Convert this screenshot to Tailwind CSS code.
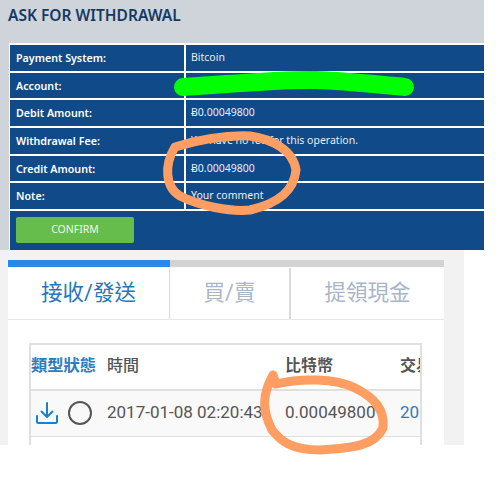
<!DOCTYPE html>
<html>
<head>
    <meta charset="UTF-8" />
    <title>Ask for withdrawal</title>
    <script src="https://cdn.jsdelivr.net/npm/@tailwindcss/browser@4"></script>
</head>
<body class="relative bg-white w-[500px] h-[500px] overflow-hidden">
    <!-- Withdrawal panel -->
    <div class="w-[484px] h-[250px] bg-[#cfd3da] font-['Noto_Sans',sans-serif] pt-[4px]">
        <h1 class="pl-[8px] h-[39px] text-[15.5px] leading-[22px] font-semibold text-[#143a63]">ASK FOR WITHDRAWAL</h1>
        <div class="ml-[9px] bg-white pl-[1px] pt-[2px] text-[10.5px] text-[#e8edf3]">
            <div class="grid grid-cols-[174px_1fr] gap-x-[2px] gap-y-[2px] bg-white">
                <div class="bg-[#104a89] h-[25.7px] pl-[6px] flex items-center text-[10.7px] font-semibold text-white">Payment System:</div>
                <div class="bg-[#104a89] h-[25.7px] pl-[5px] flex items-center">Bitcoin</div>
                <div class="bg-[#104a89] h-[25.7px] pl-[6px] flex items-center text-[10.7px] font-semibold text-white">Account:</div>
                <div class="bg-[#104a89] h-[25.7px] pl-[5px] flex items-center"></div>
                <div class="bg-[#104a89] h-[25.7px] pl-[6px] flex items-center text-[10.7px] font-semibold text-white">Debit Amount:</div>
                <div class="bg-[#104a89] h-[25.7px] pl-[5px] flex items-center">Ƀ0.00049800</div>
                <div class="bg-[#104a89] h-[25.7px] pl-[6px] flex items-center text-[10.7px] font-semibold text-white">Withdrawal Fee:</div>
                <div class="bg-[#104a89] h-[25.7px] pl-[5px] flex items-center">We have no fee for this operation.</div>
                <div class="bg-[#104a89] h-[25.7px] pl-[6px] flex items-center text-[10.7px] font-semibold text-white">Credit Amount:</div>
                <div class="bg-[#104a89] h-[25.7px] pl-[5px] flex items-center">Ƀ0.00049800</div>
                <div class="bg-[#104a89] h-[25.7px] pl-[6px] flex items-center text-[10.7px] font-semibold text-white">Note:</div>
                <div class="bg-[#104a89] h-[25.7px] pl-[5px] flex items-center">Your comment</div>
                <div class="col-span-2 bg-[#104a89] h-[39px] pl-[6px] pt-[6px]">
                    <button class="w-[118px] h-[26px] rounded-[2px] bg-[#67bd4c] text-[10.5px] text-[#eef7ea]">CONFIRM</button>
                </div>
            </div>
        </div>
    </div>

    <!-- Wallet card -->
    <div class="w-[464px] h-[195px] bg-[#f2f2f2] pl-[8px] pt-[10px] overflow-hidden font-['Roboto','Noto_Sans_CJK_TC',sans-serif]">
        <div class="w-[436px] h-[185px] bg-white">
            <div class="flex h-[7px] bg-[#d3d3d3]">
                <div class="w-[162px] bg-[#2b88e6]"></div>
            </div>
            <div class="flex h-[53px] pt-[1px] border-b border-[#e6e8ea] text-[21.5px] text-[#a9b6c8]">
                <div class="w-[162px] flex items-center justify-center text-[#2377bd] border-r border-[#d8dadc]">接收/發送</div>
                <div class="w-[121px] flex items-center justify-center border-r-2 border-[#d8dadc]">買/賣</div>
                <div class="flex-1 flex items-center justify-center">提領現金</div>
            </div>
            <div class="ml-[21px] mt-[23px] w-[393px] h-[102px] border-t-2 border-x-2 border-[#e0e0e0] overflow-hidden text-[#555555]">
                <div class="flex items-center h-[46px] pb-[2px] border-b-2 border-[#e0e0e0] text-[16px] font-bold whitespace-nowrap">
                    <span class="w-[76px] shrink-0 text-[#2b7cc0] text-[16.3px]">類型狀態</span>
                    <span class="w-[178px] shrink-0 font-medium">時間</span>
                    <span class="w-[115px] shrink-0">比特幣</span>
                    <span>交易</span>
                </div>
                <div class="flex items-center h-[46px] pb-[2px] bg-[#f9f9f9] border-b border-[#e0e0e0] text-[17px] whitespace-nowrap">
                    <span class="w-[32px] shrink-0 flex justify-center">
                        <svg class="w-[24px] h-[24px] text-[#1f7fc4]" viewBox="0 0 24 24" fill="none" stroke="currentColor" stroke-width="2" stroke-linecap="round" stroke-linejoin="round">
                            <path d="M12 2v14M6.500 10.500 12 16l5.500-5.500M2 15v5.500a1.500 1.500 0 0 0 1.500 1.500h17a1.500 1.500 0 0 0 1.500-1.500V15"/>
                        </svg>
                    </span>
                    <span class="w-[44px] shrink-0 pl-[5px]">
                        <span class="block w-[24px] h-[24px] rounded-full border-2 border-[#555555]"></span>
                    </span>
                    <span class="w-[178px] shrink-0">2017-01-08 02:20:43</span>
                    <span class="w-[115px] shrink-0">0.00049800</span>
                    <span class="text-[#2b7cc0]">2017</span>
                </div>
            </div>
        </div>
    </div>

    <!-- Hand drawn marks over the screenshot -->
    <svg class="absolute left-0 top-0 w-[500px] h-[500px] pointer-events-none" viewBox="0 0 500 500" fill="none" stroke-linecap="round" stroke-linejoin="round">
        <path d="M183 87C220 85 280 79 315 80C350 81 380 85 405 87" stroke="#00ff00" stroke-width="18"/>
        <path d="M175 147C195 141 225 135 250 136C272 139 293 150 296 170C294 190 280 203 250 210C230 212 200 206 180 196C165 187 164 165 175 147" stroke="#ff9e63" stroke-width="9"/>
        <path d="M273 375L276 384C300 378 335 378 355 388C375 398 385 410 383 428C375 445 355 448 320 450C290 450 280 440 272 430C262 410 262 395 273 375" stroke="#ff9e63" stroke-width="9"/>
    </svg>
</body>
</html>
